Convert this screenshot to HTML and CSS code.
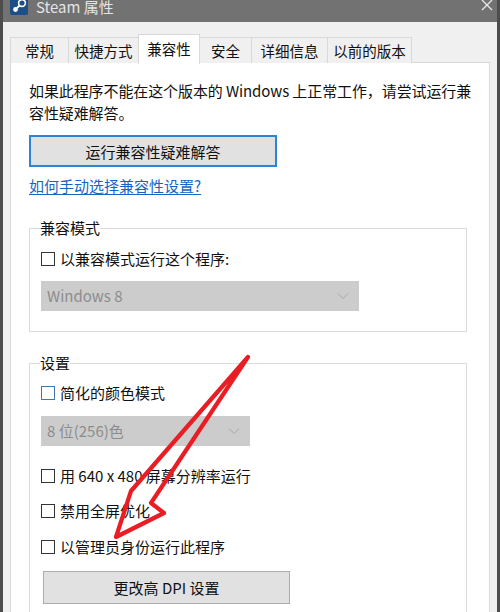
FILE: index.html
```html
<!DOCTYPE html>
<html lang="zh-CN">
<head>
<meta charset="utf-8">
<title>Steam 属性</title>
<link rel="stylesheet" href="styles.css">
</head>
<body>
<div class="window">
  <div class="titlebar">
    <svg class="app-icon" width="18" height="18" viewBox="0 0 18 18">
      <rect x="0" y="0" width="18" height="18" rx="2" fill="#1b4f86"/>
      <circle cx="12" cy="6" r="3.4" fill="none" stroke="#fff" stroke-width="1.6"/>
      <circle cx="5.5" cy="12.5" r="2.4" fill="#fff"/>
      <path d="M7 11 L10 8" stroke="#fff" stroke-width="2"/>
    </svg>
    <span class="title">Steam 属性</span>
    <svg class="close" width="12" height="12" viewBox="0 0 12 12">
      <path d="M1 1 L11 11 M11 1 L1 11" stroke="#eaeaea" stroke-width="1.3"/>
    </svg>
  </div>

  <div class="tabs">
    <div class="tab t1">常规</div>
    <div class="tab t2">快捷方式</div>
    <div class="tab t3 active">兼容性</div>
    <div class="tab t4">安全</div>
    <div class="tab t5">详细信息</div>
    <div class="tab t6">以前的版本</div>
  </div>

  <div class="panel">
    <p class="intro">如果此程序不能在这个版本的 Windows 上正常工作，请尝试运行兼<br>容性疑难解答。</p>
    <div class="btn btn-focus">运行兼容性疑难解答</div>
    <a class="link" href="#">如何手动选择兼容性设置?</a>

    <fieldset class="group group1">
      <legend>兼容模式</legend>
      <label class="check row-a"><span class="box"></span>以兼容模式运行这个程序:</label>
      <div class="select select-wide">Windows 8<svg class="chev" width="12" height="8" viewBox="0 0 12 8"><path d="M1 1.5 L6 6.5 L11 1.5" fill="none" stroke="#a8a8a8" stroke-width="1"/></svg></div>
    </fieldset>

    <fieldset class="group group2">
      <legend>设置</legend>
      <label class="check row-b"><span class="box box-hover"></span>简化的颜色模式</label>
      <div class="select select-narrow">8 位(256)色<svg class="chev" width="12" height="8" viewBox="0 0 12 8"><path d="M1 1.5 L6 6.5 L11 1.5" fill="none" stroke="#a8a8a8" stroke-width="1"/></svg></div>
      <label class="check row-c"><span class="box"></span>用 640 x 480 屏幕分辨率运行</label>
      <label class="check row-d"><span class="box"></span>禁用全屏优化</label>
      <label class="check row-e"><span class="box"></span>以管理员身份运行此程序</label>
      <div class="btn btn-dpi">更改高 DPI 设置</div>
    </fieldset>
  </div>

  <svg class="arrow" width="500" height="612" viewBox="0 0 500 612">
    <path d="M248 357 L131 491 L116 537 L164 513 L151 503 Z" fill="none" stroke="#ea1c24" stroke-width="4.2" stroke-linejoin="round" stroke-linecap="round"/>
  </svg>
</div>
</body>
</html>
```

FILE: styles.css
```css
html, body {
  margin: 0;
  padding: 0;
}

body {
  width: 500px;
  height: 612px;
  overflow: hidden;
  background: #f0f0f0;
  font-family: "Noto Sans CJK SC", "Microsoft YaHei", "Noto Sans", sans-serif;
  font-size: 15px;
  color: #111;
}

.window {
  position: relative;
  box-sizing: border-box;
  width: 500px;
  height: 612px;
  border-left: 3px solid #4d4d4d;
  border-right: 3px solid #4d4d4d;
  background: #f0f0f0;
  display: flex;
  flex-direction: column;
  overflow: hidden;
}

.titlebar {
  height: 22px;
  flex: none;
  background: #727272;
  display: flex;
  align-items: flex-start;
  padding-left: 7px;
  overflow: hidden;
}

.app-icon {
  margin-top: -3px;
  flex: none;
}

.title {
  margin-left: 8px;
  margin-top: -2px;
  font-size: 15px;
  line-height: 17px;
  color: #e4e4e4;
}

.close {
  margin-left: auto;
  margin-right: 4px;
  margin-top: -1px;
}

.tabs {
  display: flex;
  align-items: flex-end;
  padding-left: 7px;
  margin-top: 12px;
  height: 29px;
  position: relative;
  z-index: 2;
}

.tab {
  box-sizing: border-box;
  height: 26px;
  margin-bottom: -1px;
  border: 1px solid #d9d9d9;
  border-bottom: none;
  margin-left: -1px;
  background: #f0f0f0;
  text-align: center;
  font-size: 14.5px;
  line-height: 25px;
  color: #111;
}

.tab.active {
  height: 30px;
  background: #ffffff;
  line-height: 28px;
  margin-bottom: -2px;
  position: relative;
  z-index: 3;
}

.t1 { width: 59px; margin-left: 0; }
.t2 { width: 71px; }
.t3 { width: 62px; }
.t4 { width: 53px; }
.t5 { width: 77px; }
.t6 { width: 85px; }

.panel {
  box-sizing: border-box;
  margin: 0 7px;
  width: 480px;
  flex: 1;
  background: #ffffff;
  border: 1px solid #d9d9d9;
  padding: 17px 10px 0 18px;
}

.intro {
  margin: 0;
  line-height: 22px;
  white-space: nowrap;
  letter-spacing: -0.1px;
}

.btn {
  box-sizing: border-box;
  background: #e1e1e1;
  border: 1px solid #adadad;
  text-align: center;
  color: #111;
}

.btn-focus {
  width: 248px;
  height: 32px;
  line-height: 29px;
  margin-top: 11px;
  border: 2px solid #2b84d6;
}

.link {
  display: block;
  width: max-content;
  margin-top: 9px;
  line-height: 20px;
  color: #1566c4;
  text-decoration: underline;
  text-underline-offset: 2px;
}

.group {
  margin: 0;
  border: 1px solid #dcdcdc;
  padding: 0 11px 0 11px;
  min-width: 0;
  width: 438px;
  box-sizing: border-box;
}

.group legend {
  padding: 0;
  margin-left: -1px;
  line-height: 20px;
  color: #111;
}

.group1 {
  margin-top: 22px;
  padding-bottom: 20px;
}

.group2 {
  margin-top: 21px;
  padding-bottom: 40px;
}

.check {
  display: flex;
  align-items: center;
  height: 20px;
  line-height: 20px;
}

.box {
  box-sizing: border-box;
  width: 14px;
  height: 14px;
  border: 1px solid #333;
  background: #fff;
  margin-right: 5px;
  flex: none;
}

.box-hover {
  border-color: #3d79b3;
}

.row-a { margin-top: 11px; }
.row-b { margin-top: 10px; }
.row-c { margin-top: 20px; }
.row-d { margin-top: 15px; }
.row-e { margin-top: 16px; }

.select {
  box-sizing: border-box;
  height: 30px;
  margin-top: 12px;
  background: #cccccc;
  color: #8c8c8c;
  display: flex;
  align-items: center;
  padding-left: 6px;
  padding-right: 10px;
  line-height: 20px;
}

.select-wide { width: 318px; }
.select-narrow { width: 209px; margin-top: 13px; }

.chev {
  margin-left: auto;
}

.btn-dpi {
  width: 247px;
  height: 33px;
  line-height: 31px;
  margin-top: 14px;
  margin-left: 2px;
}

.arrow {
  position: absolute;
  left: -3px;
  top: 0;
  pointer-events: none;
  z-index: 10;
}
```
